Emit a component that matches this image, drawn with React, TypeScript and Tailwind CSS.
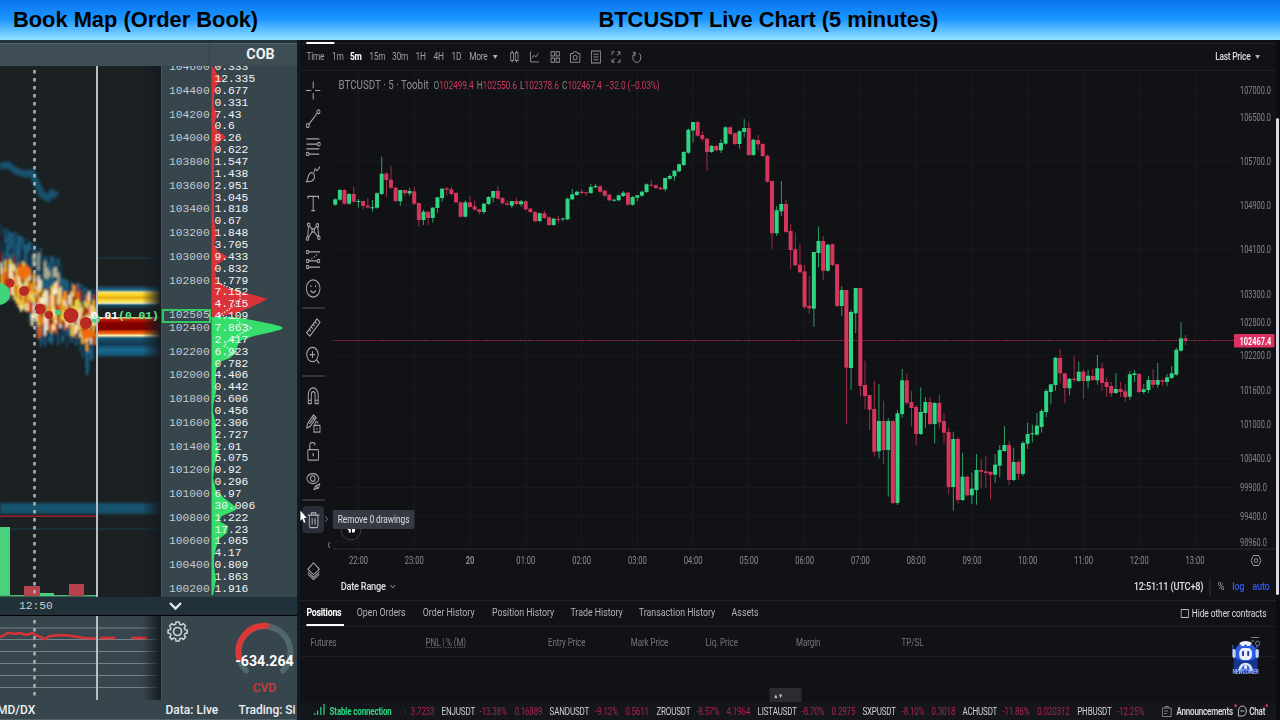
import { ReactNode } from 'react';

// [direction, body top, body bottom, wick high, wick low]
type Candle = [string, number, number, number?, number?];

const CANDLES: Candle[] = [
  ['g', 199.3, 204.7], ['g', 190, 199.7], ['r', 190, 203.7], ['g', 194, 203.7], ['r', 194, 201.7, 186.7],
  ['g', 201, 202, 199, 207.5], ['r', 201, 206, 201, 209.5], ['r', 205.6, 207.5, 198], ['g', 207.3, 208.2, 200, 211.7], ['g', 193.3, 207.7],
  ['g', 173.7, 194, 156.7], ['r', 173.7, 180, 172, 197], ['r', 179.7, 187.7, 166], ['r', 187.7, 201], ['g', 190, 201.3, 190, 205.7],
  ['r', 190, 193.3, 190, 196.5], ['g', 191, 193.5, 187.7, 196], ['r', 191.3, 203.7, 186.7], ['r', 203, 220, 203, 226.7], ['g', 211.7, 220, 209.7, 225],
  ['r', 211.7, 218, 211.7, 225], ['g', 207.7, 218, 207, 222.7], ['g', 197.3, 208, 197, 212.7], ['g', 188.7, 198, 188, 201.7], ['r', 188.3, 189.7, 187, 195.3],
  ['r', 189.3, 194, 186.7], ['r', 193, 202.3], ['r', 202.3, 216.7], ['g', 202.3, 216.7, 200.3], ['r', 202.3, 207, 196],
  ['r', 206.3, 209.7, 200.3], ['r', 209.3, 212, 209, 214.7], ['g', 203.7, 212, 203, 214], ['g', 197, 204], ['g', 191, 197.7, 191, 202.3],
  ['r', 191, 198.7, 186], ['r', 198, 203.3], ['r', 203.3, 204.7, 200], ['g', 201, 205.7, 201, 208.3], ['r', 201, 204, 198],
  ['g', 201.3, 204.3, 200, 206.7], ['r', 201.3, 209.3], ['r', 208.7, 212], ['r', 212, 221.3], ['g', 213.3, 221],
  ['r', 213.3, 218, 210.3], ['r', 217.3, 225], ['g', 218.7, 225], ['r', 219, 219.7, 216, 223.3], ['g', 218.3, 219.3, 218, 221.3],
  ['g', 198.7, 219.3], ['g', 194.3, 199.3, 189], ['g', 191.7, 195], ['r', 191.7, 193, 189.3], ['r', 192.3, 193, 192, 195.7],
  ['g', 187, 193, 183.7], ['g', 186, 187.3, 183.7], ['r', 186.3, 191.7], ['r', 190.7, 195.7], ['r', 194.7, 200.3],
  ['g', 199.7, 200.7], ['g', 195.3, 200.3], ['g', 192.7, 196, 191], ['r', 192.7, 204.7], ['g', 197, 204.7],
  ['g', 195.3, 197.7, 195, 201.3], ['g', 191.7, 195.7], ['g', 184.3, 192], ['r', 184.7, 185.7, 180], ['r', 185.3, 188],
  ['r', 187.7, 189.3], ['g', 178, 189.3, 178, 191.3], ['g', 176, 178.7, 174], ['g', 170.7, 176.3, 170, 180.7], ['g', 164.3, 171.3],
  ['g', 152, 165], ['g', 129.7, 152.7], ['g', 122, 130.5, 122, 142.5], ['r', 122, 135.7], ['r', 135, 139, 131, 141.7],
  ['r', 138.7, 152, 138, 171], ['g', 146, 152], ['r', 146, 150.3], ['g', 143, 150.3, 139.3, 153], ['g', 127.3, 143.7],
  ['r', 127.3, 134], ['r', 133.3, 144], ['g', 131.3, 144, 130, 148.7], ['g', 128, 132, 119, 137.3], ['r', 128, 155, 122],
  ['g', 139.7, 155], ['r', 140, 144.3, 135, 150], ['r', 144, 156], ['r', 155.7, 181.7], ['r', 181, 233.3, 181, 248.7],
  ['g', 210.3, 233.3, 206, 236], ['g', 204, 211.3, 181, 216], ['r', 204, 232, 200], ['r', 231, 250, 224, 269.3], ['r', 249.3, 265.3, 232.7],
  ['r', 264.7, 272.3, 244], ['r', 271.3, 307, 265, 309], ['r', 305.7, 308.3, 276, 313.7], ['g', 252, 308.7, 252, 326.7], ['g', 241, 253, 226.7, 267.3],
  ['r', 241, 270.7, 236, 280], ['g', 244.7, 270.7], ['r', 244.3, 265], ['r', 264.3, 306], ['g', 290, 306, 286, 316],
  ['r', 290, 367.7, 290, 424], ['g', 312, 368, 310, 390], ['g', 288, 313.3, 288, 333], ['r', 288, 386, 288, 396.7], ['r', 385, 396, 360.7, 409.3],
  ['r', 395, 409.7, 395, 430], ['r', 409, 451.7, 381, 456.7], ['g', 421, 451.3, 384, 458.3], ['r', 421, 450, 400.7, 464], ['g', 421, 450, 418, 496.7],
  ['r', 421, 503], ['g', 413.3, 503, 410, 505], ['g', 380.3, 414, 369, 417.7], ['r', 380.3, 402.7, 373.3, 405], ['r', 402, 408, 391, 426.7],
  ['r', 407, 434, 405, 445.3], ['g', 412, 434, 387.3], ['g', 402, 413, 397, 427.7], ['r', 402, 424, 397], ['g', 403, 424, 402, 443.3],
  ['r', 403, 422.3, 394.3, 428], ['r', 421, 432.7, 413.3, 443.3], ['r', 432, 487, 427.3, 494.3], ['g', 439, 487, 431.7, 510.7], ['r', 439, 500, 437, 503.3],
  ['g', 476.7, 500, 452.7], ['r', 476.7, 495.3], ['g', 488.7, 495.3, 472.3, 504], ['g', 470, 490, 454, 504.7], ['r', 470, 471.7, 459.3, 488.3],
  ['r', 471.3, 473, 456, 488], ['r', 472, 474.7, 471, 499.3], ['g', 464.7, 474.7, 454, 483], ['g', 450, 465.7, 445, 477.7], ['g', 445, 451, 426],
  ['r', 445, 480, 440.7, 485.3], ['g', 462, 480, 447.7], ['r', 462, 473.7, 460, 480], ['g', 443, 474, 441, 476], ['g', 434, 443.7, 422.7, 449],
  ['g', 433.3, 434.3, 424.7, 442.3], ['g', 425.7, 434.7, 413], ['g', 411, 427, 409, 432.7], ['g', 391, 412, 389, 417.3], ['g', 384.3, 392, 384, 404.3],
  ['g', 357.7, 385, 357, 390.7], ['r', 358, 373.3, 349.3, 383.3], ['r', 373.3, 388, 373, 403.3], ['g', 378.7, 388.3, 378, 395.3], ['r', 378.7, 380, 356, 382],
  ['g', 371.7, 381, 361.7], ['r', 371.7, 381, 369, 399], ['g', 375.7, 381, 370, 388.3], ['r', 376, 380, 369], ['g', 368.3, 380.3, 355, 384.7],
  ['r', 368.3, 383, 362.7, 390.7], ['r', 382, 387, 378, 397], ['r', 386, 393.3, 382, 397], ['g', 389, 393, 373], ['r', 389, 392, 382, 397],
  ['r', 391.3, 397, 384, 402], ['g', 374.3, 396.7, 371, 400], ['g', 373.3, 375, 370, 382], ['r', 374, 392], ['g', 389.3, 392, 384, 394],
  ['g', 380, 390, 376, 393], ['r', 380, 384.7, 369, 388], ['g', 380, 384.7, 363, 388], ['r', 380.3, 381.7, 379, 386], ['g', 377.3, 382, 374, 386],
  ['g', 373.3, 378, 366], ['g', 349.7, 374.7, 347.7], ['g', 338.3, 350.7, 322], ['r', 338.3, 340.7, 335, 345],
];

const PRICES: [string, number][] = [
  ['107000.0', 90], ['106500.0', 117], ['105700.0', 161], ['104900.0', 205], ['104100.0', 249.5], ['103300.0', 294],
  ['102800.0', 322], ['102200.0', 355.5], ['101600.0', 390], ['101000.0', 424], ['100400.0', 458.5], ['99900.0', 487.5],
  ['99400.0', 516.5], ['98960.0', 542],
];

const HOURS = ['22:00', '23:00', '20', '01:00', '02:00', '03:00', '04:00', '05:00', '06:00', '07:00', '08:00', '09:00', '10:00', '11:00', '12:00', '13:00'];

const COB = [
  '0.333', '12.335', '0.677', '0.331', '7.43', '0.6', '8.26', '0.622', '1.547', '1.438', '2.951', '3.045', '1.818', '0.67', '1.848',
  '3.705', '9.433', '0.832', '1.779', '7.152', '4.715', '4.109', '7.863', '2.417', '6.923', '0.782', '4.406', '0.442', '3.606', '0.456',
  '2.306', '2.727', '2.01', '5.075', '0.92', '0.296', '6.97', '30.006', '1.222', '17.23', '1.065', '4.17', '0.809', '1.863', '1.916',
];

const GREEN = '#2fd583';
const RED = '#d6365d';

const lerp = (pts: number[][], x: number) => {
  for (let i = 1; i < pts.length; i++) {
    if (x <= pts[i][0]) {
      const [a, b] = [pts[i - 1], pts[i]];
      return a[1] + ((b[1] - a[1]) * (x - a[0])) / (b[0] - a[0]);
    }
  }
  return pts[pts.length - 1][1];
};

const HOT_TOP = [[0, 252], [12, 256], [22, 264], [34, 274], [44, 282], [58, 282], [70, 284], [84, 294], [97, 292]];
const HOT_BOTTOM = [[0, 284], [12, 294], [24, 306], [36, 324], [46, 328], [60, 326], [74, 328], [82, 340], [90, 344], [97, 334]];
const HAZE_TOP = [[0, 224], [18, 232], [34, 242], [44, 252], [59, 254], [60, 272], [70, 280], [97, 288]];
const HAZE_BOTTOM = [[0, 292], [22, 312], [36, 334], [46, 344], [70, 340], [80, 352], [86, 378], [90, 362], [97, 344]];

const buildHeat = () => {
  let seed = 7;
  const rnd = () => {
    seed = (seed * 16807) % 2147483647;
    return seed / 2147483647;
  };
  const hot = ['#f8e04a', '#ffd23c', '#fff4c4', '#f27a18', '#f4d860', '#c42c0c', '#7c1608', '#ffb020', '#fff6dc', '#e8600c'];
  const cold = ['#0f4a6c', '#17688f', '#1f7aa4', '#133c54', '#1b2730', '#1a5f84'];
  const cells: { x: number; y: number; h: number; c: string; o: number }[] = [];
  for (let x = 0; x < 96; x += 2.2) {
    const top = lerp(HAZE_TOP, x) + rnd() * 5;
    const bottom = lerp(HAZE_BOTTOM, x) - rnd() * 8;
    const h1 = lerp(HOT_TOP, x) - 4 + rnd() * 8;
    const h2 = lerp(HOT_BOTTOM, x) - 4 + rnd() * 8;
    for (let y = top; y < bottom; ) {
      const h = 4 + rnd() * 9;
      const isHot = y > h1 && y < h2;
      const spark = x > 32 && x < 60 && y > top + 2 && y < top + 18 && rnd() > 0.5;
      const pal = isHot ? hot : cold;
      cells.push({ x, y, h, c: spark ? '#d8dcb8' : pal[Math.floor(rnd() * pal.length)], o: isHot ? 0.95 : 0.75 });
      y += h;
    }
  }
  return cells;
};

const HEAT = buildHeat();

const Heatmap = () => (
  <svg width="161" height="531" viewBox="0 66 161 531" className="block shrink-0">
    <defs>
      <linearGradient id="fade" x1="0" x2="1">
        <stop offset="0" stopColor="#171c20" stopOpacity="0" />
        <stop offset="1" stopColor="#141a20" />
      </linearGradient>
      <linearGradient id="ask" x1="0" x2="0" y1="0" y2="1">
        <stop offset="0" stopColor="#1b2023" />
        <stop offset="0.2" stopColor="#1a6d96" />
        <stop offset="0.3" stopColor="#f6dc78" />
        <stop offset="0.42" stopColor="#fbd51c" />
        <stop offset="0.52" stopColor="#e8b010" />
        <stop offset="0.68" stopColor="#ffe34a" />
        <stop offset="0.76" stopColor="#e8e6b8" />
        <stop offset="0.84" stopColor="#14506e" />
        <stop offset="1" stopColor="#1b2023" />
      </linearGradient>
      <linearGradient id="bid" x1="0" x2="0" y1="0" y2="1">
        <stop offset="0" stopColor="#ffe9a0" />
        <stop offset="0.06" stopColor="#c82008" />
        <stop offset="0.14" stopColor="#8a0000" />
        <stop offset="0.3" stopColor="#7c0000" />
        <stop offset="0.34" stopColor="#d23a00" />
        <stop offset="0.4" stopColor="#f06a10" />
        <stop offset="0.45" stopColor="#ffeeb0" />
        <stop offset="0.52" stopColor="#155274" />
        <stop offset="0.66" stopColor="#123a52" />
        <stop offset="0.8" stopColor="#1a6d94" />
        <stop offset="0.93" stopColor="#14506c" />
        <stop offset="1" stopColor="#1b2023" />
      </linearGradient>
      <filter id="soft" x="-10%" y="-10%" width="120%" height="120%">
        <feGaussianBlur stdDeviation="0.8" />
      </filter>
      <filter id="softer" x="-20%" y="-40%" width="140%" height="180%">
        <feGaussianBlur stdDeviation="1.6" />
      </filter>
    </defs>
    <rect y="66" width="161" height="531" fill="#1b2023" />
    <path d="M0 166 L8 165 L16 171 L24 174 L32 173 L37 184 L42 195 L48 198 L52 193 L57 196" fill="none" stroke="#165b7c" strokeWidth="7" opacity="0.85" filter="url(#softer)" />
    <path d="M97 258 H160 M10 529 H160" stroke="#193038" strokeWidth="2" />
    <g filter="url(#soft)">
      {HEAT.map((c, i) => (
        <rect key={i} x={c.x} y={c.y} width="2.4" height={c.h} fill={c.c} opacity={c.o} />
      ))}
      <ellipse cx="24" cy="272" rx="7" ry="7" fill="#f0700c" />
      <ellipse cx="88" cy="334" rx="7" ry="5" fill="#f06a10" />
    </g>
    <rect x="97" y="285" width="64" height="24" fill="url(#ask)" />
    <rect x="97" y="317" width="64" height="41" fill="url(#bid)" />
    <rect y="503" width="161" height="11" fill="#14526e" filter="url(#softer)" />
    <rect x="142" y="66" width="19" height="531" fill="url(#fade)" />
    <rect y="515.5" width="97" height="1.5" fill="#a01c28" />
    <rect y="527" width="10" height="69" fill="#4bd07e" />
    <rect y="595" width="98" height="1.5" fill="#4bb87a" />
    <rect x="24" y="586" width="16" height="10" fill="#b5424c" />
    <rect x="69" y="584" width="15" height="12" fill="#b5424c" />
    <rect x="40" y="593" width="14" height="3" fill="#4bd07e" />
    <g fill="#b92a24">
      <circle cx="10" cy="283" r="4.500" />
      <circle cx="24" cy="291" r="5" />
      <circle cx="40" cy="309" r="5.500" />
      <circle cx="49" cy="315" r="4" />
      <circle cx="71" cy="315.500" r="7.500" />
      <circle cx="86" cy="323" r="6" />
    </g>
    <g fill="#3fd57a">
      <circle cx="-1" cy="294" r="11" />
      <circle cx="58" cy="312.500" r="2.800" />
      <circle cx="96" cy="319" r="4" />
    </g>
    <path d="M34.500 70 V597" stroke="#a9aeb0" strokeWidth="2.600" strokeDasharray="3.500 4.500" />
    <path d="M97 66 V597" stroke="#b9bec0" strokeWidth="2" />
    <text x="91" y="318.500" className="font-['Liberation_Mono',monospace] text-[11.3px] font-bold" fill="#fff">
      0.01<tspan fill="#5be88a">(0.01)</tspan>
    </text>
  </svg>
);

const Ladder = () => (
  <div className="relative h-[531px] w-[136px] overflow-hidden bg-[#37454d] border-l border-[#46555d]">
    <svg width="135" height="531" viewBox="162 66 135 531" className="absolute inset-0">
      <path d="M211.500 66 L214 68 L217 74 L223 79 L216 86 L214 96 L214 106 L217 115 L214 125 L218 131 L226 137 L217 144 L214 152 L214 220 L217 234 L214 244 L218 251 L228 257 L218 264 L215 272 L217 280 L225 287 L242 292 L258 296 L267 299 L260 303 L247 309 L234 314 L211.500 317 Z" fill="#da3438" />
      <path d="M211.500 317 L234 317 L252 320 L272 324 L281 326.500 L283 328 L281 329.500 L272 332 L254 336 L240 341 L237 347 L236 353 L230 358 L220 362 L216 370 L216 392 L213 406 L213 412 L216 424 L216 436 L219 452 L215 464 L213 478 L216 490 L224 498 L236 507 L236 510 L222 516 L219 521 L228 526 L227 533 L219 539 L216 548 L214 558 L214 566 L216 580 L213 595 L211.500 595 Z" fill="#36df6c" />
      <path d="M218 283 L240 292 L240 301 L228 310 L220 315 L236 319 L240 323 L252 328 L240 334 L228 341 L224 346 L236 352 L226 357" fill="none" stroke="#e8f0ee" strokeWidth="1.200" strokeDasharray="1.500 1.500" />
    </svg>
    <div className="relative -mt-[4.200px] font-['Liberation_Mono',monospace] text-[11.3px]">
      {COB.map((v, i) => (
        <div key={i} className="flex h-[11.870px] items-center leading-none">
          <span className="w-[52.5px] shrink-0 pl-[7px] text-[#c3cacd]">{i % 2 === 0 && i !== 20 ? 104600 - i * 100 : ''}</span>
          <span className="text-[#f4f6f7]">{v}</span>
        </div>
      ))}
    </div>
    <div className="absolute top-[243px] left-0 flex h-[14px] w-[49px] items-center border-2 border-[#2fca62] bg-[#37454d] pl-[5px] font-['Liberation_Mono',monospace] text-[11.3px] leading-none text-[#c3cacd]">
      102505
    </div>
  </div>
);

const BookMap = () => (
  <div className="flex w-[300px] shrink-0 flex-col overflow-hidden border-r-[3px] border-[#0e1a28] bg-[#37454d] font-[Roboto,sans-serif]">
    <div className="flex h-[26px] shrink-0 border-t-[3px] border-[#22323a] bg-[#3f4d54]">
      <div className="w-[210px] border-t border-r border-[#56646b] border-r-[#344249]" />
      <div className="flex flex-1 items-center justify-center border-t border-[#56646b] pl-3.5 text-[14.3px] font-bold text-[#eef1f2]">COB</div>
    </div>
    <div className="flex">
      <Heatmap />
      <Ladder />
    </div>
    <div className="flex h-[18px] items-center bg-[#21313a]">
      <div className="flex w-[162px] pl-[19px] font-['Liberation_Mono',monospace] text-[11.3px] text-[#c9cfd1]">12:50</div>
      <svg width="26" height="16" viewBox="0 0 26 16">
        <path d="M8 5 L13.500 10.500 L19 5" fill="none" stroke="#e2e7e9" strokeWidth="2.400" />
      </svg>
    </div>
    <div className="flex h-[85px] border-t border-black">
      <svg width="161" height="84" viewBox="0 616 161 84" className="shrink-0">
        <rect y="616" width="161" height="84" fill="#37454d" />
        <path d="M0 628 H160 M0 639.500 H160 M0 651.500 H160 M0 663.500 H160 M0 675.500 H160 M0 687.500 H160" stroke="#73828a" strokeWidth="1" />
        <path d="M0 637 L5 635 L8 632.500 L14 634 L20 633 L26 635 L32 633 L38 636 L45 639 L50 636 L62 635 L72 636 L84 638 L97 638.500 M100 638 H115 M131 638 H147" fill="none" stroke="#d83238" strokeWidth="2.500" />
        <path d="M34.500 620 V698" stroke="#a9aeb0" strokeWidth="2.600" strokeDasharray="3.500 4.500" />
        <path d="M97 616 V700" stroke="#b9bec0" strokeWidth="2" />
        <rect x="142" y="616" width="19" height="84" fill="url(#fade)" />
      </svg>
      <div className="flex flex-1 border-l border-[#46555d]">
        <svg width="32" height="30" viewBox="-3.500 -3.500 32 30" className="shrink-0" fill="none" stroke="#c9d2d6" strokeWidth="1.700">
          <path d="M10.300 2.500 h3.400 l.6 2.600 1.800 .8 2.300-1.400 2.400 2.400 -1.400 2.300 .8 1.800 2.400 .5 v3.400 l-2.400 .5 -.8 1.800 1.400 2.300 -2.400 2.400 -2.300-1.400 -1.800 .8 -.6 2.400 h-3.400 l-.6-2.400 -1.800-.8 -2.300 1.400 -2.400-2.400 1.400-2.300 -.8-1.800 -2.400-.5 v-3.400 l2.400-.5 .8-1.800 -1.400-2.300 2.400-2.400 2.300 1.400 1.800-.8 Z" transform="translate(1.300 .2) scale(.9)" />
          <circle cx="12" cy="12" r="4" />
        </svg>
        <svg width="103" height="84" viewBox="194 616 103 84" className="overflow-visible">
          <path d="M246 670.500 A 26 26 0 1 1 283 670.500" fill="none" stroke="#50676c" strokeWidth="6" strokeLinecap="round" />
          <path d="M239.200 658 A 26 26 0 0 1 266 625.800" fill="none" stroke="#dc3838" strokeWidth="6" strokeLinecap="round" />
          <text x="264.500" y="666" textAnchor="middle" className="text-[14.200px] font-bold" fill="#fff">-634.264</text>
          <text x="264.500" y="692" textAnchor="middle" className="text-[12px] font-medium" fill="#d2383f">CVD</text>
        </svg>
      </div>
    </div>
    <div className="flex flex-1 items-center overflow-hidden border-b border-[#52626a] text-[12px] font-medium whitespace-nowrap text-[#edf0f1]">
      <span className="-ml-[3px] w-[168.500px] shrink-0">MD/DX</span>
      <span className="w-[73px] shrink-0">Data: Live</span>
      <span className="shrink-0">Trading: Si</span>
    </div>
  </div>
);

const Icon = ({ children, size = 20 }: { children: ReactNode; size?: number }) => (
  <svg width={size} height={size} viewBox="0 0 20 20" fill="none" stroke="#a6a7ad" strokeWidth="1.300" className="block">
    {children}
  </svg>
);

const TOP_ICONS = [
  <><path d="M6 1 V4 M6 15 V18 M14 1 V4 M14 15 V18" /><rect x="3.500" y="4" width="5" height="11" /><rect x="11.500" y="4" width="5" height="11" /></>,
  <path d="M3 2 V17 H18 M5.500 12 L9.500 7.500 L12.500 10 L17 5" />,
  <><rect x="2.500" y="2.500" width="6" height="6" /><rect x="11.500" y="2.500" width="6" height="6" /><rect x="2.500" y="11.500" width="6" height="6" /><rect x="11.500" y="11.500" width="6" height="6" /></>,
  <><path d="M1.500 5 H6 L7.500 2.500 H12.500 L14 5 H18.500 V17.500 H1.500 Z" /><circle cx="10" cy="10.800" r="3.500" /></>,
  <><rect x="2" y="1.500" width="16" height="17" /><path d="M5.500 6 H14.500 M5.500 10 H14.500 M5.500 14 H14.500" /></>,
  <path d="M3 7 V2.500 H7.500 M12.500 2.500 H17 V7 M17 13 V17.500 H12.500 M7.500 17.500 H3 V13 M12 8 L17 3 M8 12 L3 17" />,
  <path d="M7 4 A 7.200 7.200 0 1 0 14 4.500 M2.500 3 L7.500 3.800 L6 8.500" />,
];

const SIDE_ICONS: Record<string, ReactNode> = {
  cross: <path d="M10 0.500 V7.500 M10 12.500 V19.500 M0.500 10 H7.500 M12.500 10 H19.500" />,
  trend: <><circle cx="2.800" cy="17.500" r="2" /><circle cx="17" cy="2.800" r="2" /><path d="M4.200 16 L15.500 4.300" /></>,
  fib: <><path d="M1 2 H18 M1 7.500 H15.500 M1 12.500 H18 M4.500 18 H18" /><circle cx="17.500" cy="7.500" r="1.900" /><circle cx="2.500" cy="18" r="1.900" /></>,
  brush: <><path d="M1 17.500 C4 15 2 11 6 8.500 C10 7 13 11 11 14.500 C9 18 5 17.500 1 17.500 Z M11 8 C12 4 12.500 3 14 5.500 C15.500 7.500 17 3 19 2" /></>,
  text: <path d="M3 5 V2.500 H17 V5 M10 2.500 V17.500 M7.500 17.500 H12.500" />,
  pattern: <><circle cx="4" cy="2.800" r="1.700" /><circle cx="15.500" cy="3.500" r="1.700" /><circle cx="2.500" cy="17.500" r="1.700" /><circle cx="17.500" cy="16.500" r="1.700" /><circle cx="10" cy="9" r="1.700" /><path d="M3.800 4.500 L2.800 15.800 M4.800 4.500 L9 7.500 M11 7.600 L14.500 4.800 M16 5.200 L17.300 14.800 M8.800 10.200 L3.800 16.200 M11.200 10.200 L16.200 15.500" /></>,
  forecast: <><path d="M4.500 2 H19 M4.500 11.500 H15 M4.500 18 H19" /><path d="M4.500 11 L17 4" strokeDasharray="1.500 2" /><circle cx="2.500" cy="2" r="1.700" /><circle cx="2.500" cy="11.500" r="1.700" /><circle cx="17" cy="11.500" r="1.700" /><circle cx="2.500" cy="18" r="1.700" /></>,
  smile: <><circle cx="10" cy="10" r="9" /><path d="M6.500 12 C8 15 12 15 13.500 12 M7 6.500 V8.500 M13 6.500 V8.500" /></>,
  ruler: <path d="M1.500 15.500 L15 1 L19 4.500 L5.500 19 Z M5 12 L7 14 M7.500 9.300 L9.500 11.300 M10 6.600 L12 8.600 M12.500 4 L14.500 6" />,
  zoom: <><circle cx="9" cy="9" r="7.500" /><path d="M14.500 14.500 L18 18.500 M9 5.500 V12.500 M5.500 9 H12.500" /></>,
  magnet: <path d="M3.500 18.500 V9 A 6.500 7 0 0 1 16.500 9 V18.500 H12.500 V9 A 2.500 3 0 0 0 7.500 9 V18.500 Z M3.500 15 H7.500 M12.500 15 H16.500" />,
  pencilLock: <><path d="M1.500 14.500 L2.500 10 L10.500 1 L14 4 L6 13 Z M5 10.500 L11.500 3.500 M8.500 2.500 L12.500 6" /><rect x="11" y="12" width="8" height="7" /><path d="M12.500 12 V10 A 2 2 0 0 1 16.500 10 M15 14.500 V16.500" /></>,
  lock: <><rect x="3" y="8" width="14" height="11" rx="1" /><path d="M5.500 8 V4 A 3.500 3.500 0 0 1 12.500 3.500 M10 11.500 V15" strokeWidth="1.500" /></>,
  eye: <><path d="M1.500 8 C4 1 15 1 17.500 8 C15 15 4 15 1.500 8 Z" /><circle cx="9.500" cy="8" r="3" /><path d="M11 19.500 L13 16 L18.500 13.500 L17 18 Z M13.500 16 L16 18" /></>,
};

const Side = ({ name, gap }: { name: string; gap?: string }) => (
  <div className={`flex h-5 items-center justify-center ${gap ?? 'mb-[8.3px]'}`}>
    <Icon size={19}>{SIDE_ICONS[name]}</Icon>
  </div>
);

const Rule = ({ gap }: { gap: string }) => <div className={`h-0.5 w-7 bg-[#34353a] ${gap}`} />;

const SideBar = () => (
  <div className="flex w-[35px] shrink-0 flex-col items-center pt-2 pr-[2px]">
    <Side name="cross" />
    <Side name="trend" />
    <Side name="fib" />
    <Side name="brush" />
    <Side name="text" />
    <Side name="pattern" />
    <Side name="forecast" />
    <Side name="smile" gap="mb-[9px]" />
    <Rule gap="mb-[8px]" />
    <Side name="ruler" />
    <Side name="zoom" gap="mb-[10px]" />
    <Rule gap="mb-[8px]" />
    <Side name="magnet" />
    <Side name="pencilLock" />
    <Side name="lock" />
    <Side name="eye" gap="mb-[9px]" />
    <Rule gap="mb-[5px]" />
    <div className="flex h-[27px] w-[27px] items-center justify-center rounded-sm bg-[#2b2d38]">
      <Icon size={18}>
        <path d="M2 4.500 H18 M7 4.500 V2 H13 V4.500 M4 4.500 V16.500 A 2 2 0 0 0 6 18.500 H14 A 2 2 0 0 0 16 16.500 V4.500 M8 8 V15 M12 8 V15" stroke="#b4b6bf" />
      </Icon>
    </div>
    <div className="mt-[29px]">
      <Icon size={18}>
        <path d="M10 1 L18 8 L10 14 L2 8 Z M2 11 L10 17 L18 11 M2 13.500 L10 19.500 L18 13.500" strokeWidth="1.300" />
      </Icon>
    </div>
  </div>
);

const Chart = () => (
  <svg width="1185" height="500" viewBox="328 72 948 500" preserveAspectRatio="none" className="block font-[Roboto,sans-serif]">
    {HOURS.map((h, i) => (
      <path key={h} d={`M${358.5 + i * 55.77} 72 V549`} stroke="#1a1b20" strokeWidth="1" />
    ))}
    {PRICES.map(([p, y]) => (
      <path key={p} d={`M333 ${y} H1234`} stroke="#18191e" strokeWidth="1" />
    ))}
    <path d="M333 549 H1276" stroke="#2a2b30" strokeWidth="1" />
    <path d="M333 340.500 H1234" stroke="#a32a4a" strokeWidth="1" strokeDasharray="1.600 1" />
    {CANDLES.map(([d, top, bottom, high, low], i) => {
      const x = 335.2 + i * 4.647;
      const lo = Math.max(low ?? bottom + 1, bottom);
      const hi = Math.min(high ?? top - 1, top);
      const fill = d === 'g' ? GREEN : RED;
      return (
        <g key={i} fill={fill}>
          <rect x={x - 0.4} y={hi} width="0.9" height={lo - hi} opacity="0.8" />
          <rect x={x - 2} y={top} width="4" height={Math.max(bottom - top, 1)} />
        </g>
      );
    })}
    {PRICES.map(([p, y]) => (
      <text key={p} transform={`translate(1240 ${y + 3.6}) scale(0.74 1)`} className="text-[10px]" fill="#85868d">{p}</text>
    ))}
    <rect x="1234" y="334" width="40.500" height="13.500" rx="1" fill="#dc3160" />
    <text transform="translate(1239.500 344.500) scale(0.74 1)" className="text-[10px] font-bold" fill="#fff">102467.4</text>
    {HOURS.map((h, i) => (
      <text key={h} transform={`translate(${358.5 + i * 55.77} 564.300) scale(0.76 1)`} textAnchor="middle" className="text-[10px]" fontWeight={h === '20' ? 700 : 400} fill="#8b8c93">{h}</text>
    ))}
    <path d="M1253.500 555.500 H1258.500 L1261 560.500 L1258.500 565.500 H1253.500 L1251 560.500 Z" fill="none" stroke="#9b9ca2" strokeWidth="1" />
    <circle cx="1256" cy="560.500" r="1.800" fill="none" stroke="#9b9ca2" strokeWidth="1" />
    <ellipse cx="351" cy="530" rx="9.800" ry="10" fill="#111216" stroke="#3c3d45" strokeWidth="1" />
    <path d="M347.500 528 H350.800 V532.500 H348.800 V530 H347.500 Z M352 528 H355.500 L354.500 532.500 H352 Z" fill="#fff" />
    <path d="M329.500 542 Q327.500 545 329.500 548" fill="none" stroke="#85868d" strokeWidth="1" />
  </svg>
);

const INTERVALS: [string, string][] = [
  ['Time', 'w-[32px]'], ['1m', 'w-[22.500px]'], ['5m', 'w-[24px] font-bold text-white'], ['15m', 'w-[28.500px]'], ['30m', 'w-[29.500px]'],
  ['1H', 'w-[22.500px]'], ['4H', 'w-[22.500px]'], ['1D', 'w-[22px]'], ['More', 'w-[29px]'],
];

const Caret = () => <span className="h-0 w-0 border-x-[3px] border-t-4 border-x-transparent border-t-[#b0b1b6]" />;

const TopBar = () => (
  <div className="relative flex h-[31px] items-center border-b border-[#1f2025] pt-[4px] pl-2 text-[10.5px] tracking-[-0.3px] text-[#9c9da3]">
    <div className="absolute top-[3px] left-0 h-px w-full bg-[#1d2025]" />
    <div className="absolute top-[2px] left-2 h-[2px] w-[35px] bg-white" />
    {INTERVALS.map(([label, cls]) => (
      <span key={label} className={cls}>{label}</span>
    ))}
    <Caret />
    <div className="ml-[14px] flex gap-[11.600px]">
      {TOP_ICONS.map((icon, i) => (
        <Icon key={i} size={14}>{icon}</Icon>
      ))}
    </div>
    <span className="mr-[6px] ml-auto font-medium text-[#dcdde0]">Last Price</span>
    <span className="mr-[25px] flex"><Caret /></span>
  </div>
);

const Ohlc = ({ k, v }: { k: string; v: string }) => (
  <span className="mr-[4px] text-[#85868d]">
    {k}<span className="text-[#c93a5c]">{v}</span>
  </span>
);

const ChartArea = () => (
  <div className="relative mt-px flex h-[528px]">
    <SideBar />
    <div className="flex flex-col">
      <Chart />
      <div className="flex h-7 items-center pt-[2px] pl-4 text-[11.500px] font-medium tracking-[-0.3px] text-[#dfe0e3]">
        Date Range
        <svg width="8" height="6" viewBox="0 0 8 6" className="ml-[5px]" fill="none" stroke="#9b9ca2"><path d="M1 1 L4 4 L7 1" /></svg>
        <span className="mr-[8px] ml-auto tracking-[-0.250px]">12:51:11 (UTC+8)</span>
        <span className="mr-[9px] h-[18px] w-px bg-[#3a3b41]" />
        <span className="mr-[10px] font-normal text-[#a2a3a8]">%</span>
        <span className="mr-[10px] text-[#3558e6]">log</span>
        <span className="mr-[8px] text-[#3558e6]">auto</span>
      </div>
    </div>
    <div className="absolute top-[3.500px] left-[48px] flex items-baseline whitespace-nowrap">
      <span className="mr-[6px] text-[12.300px] text-[#8d8e95]">BTCUSDT · 5 · Toobit</span>
      <span className="text-[10.500px] tracking-[-0.150px]">
        <Ohlc k="O" v="102499.4" />
        <Ohlc k="H" v="102550.6" />
        <Ohlc k="L" v="102378.6" />
        <Ohlc k="C" v="102467.4" />
        <span className="text-[#c93a5c]">−32.0 (−0.03%)</span>
      </span>
    </div>
    {/* tooltip of the hovered trash button */}
    <div className="absolute top-[438px] left-[41px] flex h-[19px] w-[102px] items-center justify-center rounded-[2px] bg-[#363843] text-[10.500px] tracking-[-0.1px] text-[#dcdde3]">
      Remove 0 drawings
    </div>
    <svg width="6" height="8" viewBox="0 0 6 8" className="absolute top-[443px] left-[30px]" fill="none" stroke="#777983"><path d="M1.500 1 L4.500 4 L1.500 7" /></svg>
    <svg width="10" height="14" viewBox="0 0 10 14" className="absolute top-[438px] left-0"><path d="M0.500 0.500 V11 L3 8.800 L5 13 L6.800 12 L5 8 H8.500 Z" fill="#fff" /></svg>
  </div>
);

const TABS: [string, string][] = [
  ['Open Orders', 'w-[82.500px]'], ['Order History', 'w-[86.500px]'], ['Position History', 'w-[98px]'],
  ['Trade History', 'w-[85.500px]'], ['Transaction History', 'w-[116px]'], ['Assets', 'w-[40px]'],
];

const COLUMNS: [string, string][] = [
  ['Futures', 'w-[144px]'], ['PNL | % (M)', 'w-[153px] underline decoration-dotted'], ['Entry Price', 'w-[103.500px]'], ['Mark Price', 'w-[93.500px]'],
  ['Liq. Price', 'w-[113px]'], ['Margin', 'w-[132px]'], ['TP/SL', ''],
];

const Robot = () => (
  <svg width="38" height="42" viewBox="0 0 38 42" className="absolute top-[34px] right-[24px]">
    <g fill="none" stroke="#8d8e95"><path d="M26 2.500 H36 M26 6 H30" /><circle cx="34" cy="8.500" r="2.500" /></g>
    <path d="M3 10 V16 M35 10 L31 14" stroke="#3d55c8" strokeWidth="1.500" />
    <rect x="4" y="20" width="30" height="18" rx="3" fill="#17348c" />
    <path d="M5 20 C5 3 33 3 33 20 C33 28 5 28 5 20 Z" fill="#2f5be0" />
    <path d="M11 8 Q19 4 27 8 L24 11 H21 L19 9 L17 11 H14 Z" fill="#edf1ff" />
    <rect x="2.500" y="14" width="4" height="9" rx="2" fill="#c5d0fb" />
    <rect x="31.500" y="14" width="4" height="9" rx="2" fill="#c5d0fb" />
    <rect x="11" y="13" width="16" height="12" rx="5" fill="#e9edfd" />
    <rect x="14.500" y="16" width="2.500" height="5" rx="1" fill="#1e3aa0" />
    <rect x="21" y="16" width="2.500" height="5" rx="1" fill="#1e3aa0" />
    <path d="M10 36 C10 25 28 25 28 36 Z" fill="#d9e1fd" />
    <path d="M13.500 36 C14 28 24 28 24.500 36 Z" fill="#2f5be0" />
    <circle cx="19" cy="32" r="2" fill="#e9edfd" />
    <text x="19" y="39.500" textAnchor="middle" className="text-[6.500px] font-bold" fill="#8fa5f5" textLength="33">NEWCOMER</text>
  </svg>
);

const Positions = () => (
  <div className="relative flex flex-1 flex-col border-t border-[#222328]">
    <div className="flex h-[26px] items-stretch border-b border-[#1d1e23] pl-2 text-[11px] whitespace-nowrap text-[#b0b1b7]">
      <span className="mr-[16px] flex w-[47px] items-center border-b-2 border-white pt-[2px] font-bold tracking-[-0.3px] text-white">Positions</span>
      {TABS.map(([label, w]) => (
        <span key={label} className={`flex items-center ${w}`}>{label}</span>
      ))}
      <span className="mr-[17px] ml-auto flex items-center gap-[4px] text-[10.500px] tracking-[-0.1px] text-[#dcdde0]">
        <span className="h-[9px] w-[9.500px] border border-[#b9bac0]" />
        Hide other contracts
      </span>
    </div>
    <div className="flex h-[30px] items-center border-b border-[#1d1e23] pt-px pl-[13px] text-[10px] tracking-[-0.1px] whitespace-nowrap text-[#74757c]">
      {COLUMNS.map(([label, w]) => (
        <span key={label} className={w}>{label}</span>
      ))}
    </div>
    <div className="mt-auto ml-[587px] flex h-[14px] w-[40px] items-center bg-[#2b2c31] pl-[5px] text-[6px] text-[#d0d1d5]">▲▼</div>
    <Robot />
  </div>
);

const TICKERS: [string, string, string, string, string, string][] = [
  ['ENJUSDT', 'w-[47.500px]', '-13.38%', 'w-[43.500px]', '0.16889', 'w-[44px]'],
  ['SANDUSDT', 'w-[57px]', '-9.12%', 'w-[37.500px]', '0.5611', 'w-[39px]'],
  ['ZROUSDT', 'w-[50px]', '-8.57%', 'w-[37.500px]', '4.1964', 'w-[39px]'],
  ['LISTAUSDT', 'w-[55px]', '-8.70%', 'w-[37.500px]', '0.2975', 'w-[38.500px]'],
  ['SXPUSDT', 'w-[49px]', '-8.10%', 'w-[37.500px]', '0.3018', 'w-[38.500px]'],
  ['ACHUSDT', 'w-[50px]', '-11.86%', 'w-[43.500px]', '0.020312', 'w-[50px]'],
  ['PHBUSDT', 'w-[50px]', '-12.25%', 'w-[55px]', '', 'w-0'],
];

const StatusBar = () => (
  <div className="flex h-[18px] shrink-0 items-center bg-[#15161c] pl-[17px] text-[10px] tracking-[-0.2px] whitespace-nowrap text-[#d0d1d6]">
    <svg width="15" height="11" viewBox="0 0 15 11" className="mr-[5px] -mt-1"><path d="M1.500 9 V11 M5 6.500 V11 M9 3 V11 M13 0 V11" stroke="#2fd583" strokeWidth="1.500" /></svg>
    <span className="w-[93px] font-bold tracking-0 text-[#2fd583]">Stable connection</span>
    <span className="w-[8.500px] text-[#8a1c38]">‹</span>
    <span className="w-[38.500px] text-[#b0244a]">3.7233</span>
    {TICKERS.map(([name, a, pct, b, price, c]) => (
      <div key={name} className="flex">
        <span className={a}>{name}</span>
        <span className={`text-[#a8244a] ${b}`}>{pct}</span>
        <span className={`text-[#a8244a] ${c}`}>{price}</span>
      </div>
    ))}
    <svg width="13" height="11" viewBox="0 0 13 11" className="mr-[6px] shrink-0" fill="none" stroke="#8d8e95"><path d="M1 2 H12 V10.500 H1 Z M4.500 2 V0.500 H8.500 V2 M3.500 5 H8 M3.500 7.500 H6.500" /></svg>
    <span className="relative w-[76px] font-medium text-[#e3e4e8]">
      Announcements
      <span className="absolute top-0 right-[1px] h-[3px] w-[3px] rounded-full bg-[#dc3160]" />
    </span>
    <svg width="12" height="12" viewBox="0 0 12 12" className="mr-[3px] shrink-0" fill="none" stroke="#d0d1d5"><path d="M1 11 V6 A 5 5 0 1 1 6 11 Z M3.500 6 H8.500" /></svg>
    <span className="relative font-medium text-[#e3e4e8]">
      Chat
      <span className="absolute top-0 -right-[3px] h-[3px] w-[3px] rounded-full bg-[#dc3160]" />
    </span>
  </div>
);

export default function App() {
  return (
    <div className="flex h-[720px] w-[1280px] flex-col overflow-hidden bg-[#0f1014]">
      <header className="flex h-10 shrink-0 items-center bg-linear-to-b from-[#0a74f0] via-[#1c98ff] to-[#8fe2ff] pl-[13px] font-['Liberation_Sans',Arial,sans-serif] text-[21.850px] font-bold text-black">
        <h1 className="w-[585.500px]">Book Map (Order Book)</h1>
        <h2>BTCUSDT Live Chart (5 minutes)</h2>
      </header>
      <div className="flex h-[680px]">
        <BookMap />
        <div className="relative w-[980px] overflow-hidden">
          {/* the exchange page is shown squeezed to 80% of its width */}
          <div className="flex h-full w-[1225px] origin-left scale-x-80 flex-col bg-[#111216] font-[Roboto,sans-serif]">
            <TopBar />
            <ChartArea />
            <Positions />
            <StatusBar />
          </div>
          <div className="absolute top-0 right-0 h-full w-1 bg-[#0c0d12]">
            <div className="mt-[78px] h-[477px] w-[3px] rounded-sm bg-[#d9dae4]" />
          </div>
        </div>
      </div>
    </div>
  );
}
